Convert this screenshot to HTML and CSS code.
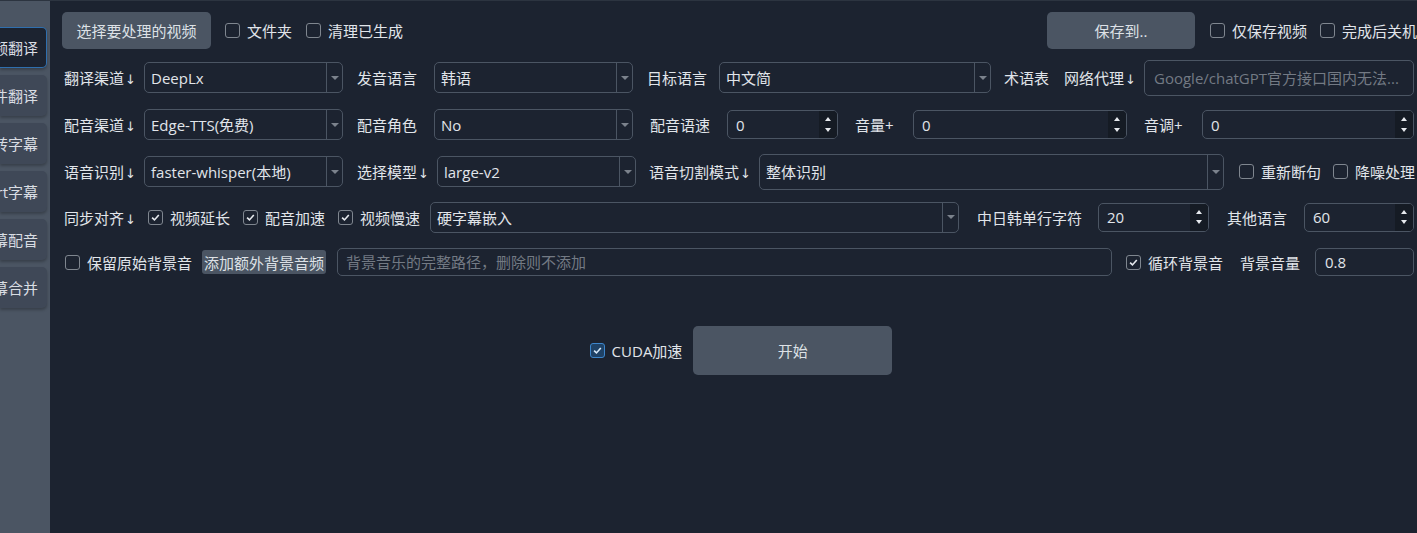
FILE: index.html
```html
<!DOCTYPE html>
<html lang="zh-CN">
<head>
    <meta charset="UTF-8">
    <title>视频翻译</title>
    <link rel="stylesheet" href="styles.css">
</head>
<body>
    <nav class="sidebar">
        <div class="nav-btn active">视频翻译</div>
        <div class="nav-btn">文件翻译</div>
        <div class="nav-btn">音视频转字幕</div>
        <div class="nav-btn">翻译srt字幕</div>
        <div class="nav-btn">字幕配音</div>
        <div class="nav-btn">视频字幕合并</div>
    </nav>

    <main class="main">
        <div class="row-top">
            <button class="btn btn-select">选择要处理的视频</button>
            <label class="check"><span class="box"></span>文件夹</label>
            <label class="check"><span class="box"></span>清理已生成</label>
            <div class="top-right">
                <button class="btn btn-save">保存到..</button>
                <label class="check"><span class="box"></span>仅保存视频</label>
                <label class="check"><span class="box"></span>完成后关机</label>
            </div>
        </div>

        <div class="row row-translate">
            <span class="lbl first">翻译渠道<span class="arr">↓</span></span>
            <div class="combo"><span class="combo-text">DeepLx</span><span class="combo-arrow"></span></div>
            <span class="lbl">发音语言</span>
            <div class="combo"><span class="combo-text">韩语</span><span class="combo-arrow"></span></div>
            <span class="lbl">目标语言</span>
            <div class="combo"><span class="combo-text">中文简</span><span class="combo-arrow"></span></div>
            <span class="lbl lbl-pair"><span>术语表</span><span>网络代理<span class="arr">↓</span></span></span>
            <input class="field tall" placeholder="Google/chatGPT官方接口国内无法...">
        </div>

        <div class="row row-dub">
            <span class="lbl first">配音渠道<span class="arr">↓</span></span>
            <div class="combo"><span class="combo-text">Edge-TTS(免费)</span><span class="combo-arrow"></span></div>
            <span class="lbl">配音角色</span>
            <div class="combo"><span class="combo-text">No</span><span class="combo-arrow"></span></div>
            <span class="lbl">配音语速</span>
            <div class="spin"><span class="spin-text">0</span><span class="spin-btns"><i class="up"></i><i class="down"></i></span></div>
            <span class="lbl">音量+</span>
            <div class="spin"><span class="spin-text">0</span><span class="spin-btns"><i class="up"></i><i class="down"></i></span></div>
            <span class="lbl">音调+</span>
            <div class="spin"><span class="spin-text">0</span><span class="spin-btns"><i class="up"></i><i class="down"></i></span></div>
        </div>

        <div class="row row-asr">
            <span class="lbl first">语音识别<span class="arr">↓</span></span>
            <div class="combo"><span class="combo-text">faster-whisper(本地)</span><span class="combo-arrow"></span></div>
            <span class="lbl">选择模型<span class="arr">↓</span></span>
            <div class="combo"><span class="combo-text">large-v2</span><span class="combo-arrow"></span></div>
            <span class="lbl">语音切割模式<span class="arr">↓</span></span>
            <div class="combo tall"><span class="combo-text">整体识别</span><span class="combo-arrow"></span></div>
            <label class="check"><span class="box"></span>重新断句</label>
            <label class="check"><span class="box"></span>降噪处理</label>
        </div>

        <div class="row row-sync">
            <span class="lbl first">同步对齐<span class="arr">↓</span></span>
            <label class="check"><span class="box on"><svg viewBox="0 0 15 15"><path d="M3.6 7.6l2.7 2.7 5-5.6"/></svg></span>视频延长</label>
            <label class="check"><span class="box on"><svg viewBox="0 0 15 15"><path d="M3.6 7.6l2.7 2.7 5-5.6"/></svg></span>配音加速</label>
            <label class="check"><span class="box on"><svg viewBox="0 0 15 15"><path d="M3.6 7.6l2.7 2.7 5-5.6"/></svg></span>视频慢速</label>
            <div class="combo"><span class="combo-text">硬字幕嵌入</span><span class="combo-arrow"></span></div>
            <span class="lbl">中日韩单行字符</span>
            <div class="spin"><span class="spin-text">20</span><span class="spin-btns"><i class="up"></i><i class="down"></i></span></div>
            <span class="lbl">其他语言</span>
            <div class="spin"><span class="spin-text">60</span><span class="spin-btns"><i class="up"></i><i class="down"></i></span></div>
        </div>

        <div class="row row-bgm">
            <label class="check keep"><span class="box"></span>保留原始背景音</label>
            <button class="btn btn-bgm">添加额外背景音频</button>
            <input class="field bgm-path" placeholder="背景音乐的完整路径，删除则不添加">
            <label class="check loop"><span class="box on"><svg viewBox="0 0 15 15"><path d="M3.6 7.6l2.7 2.7 5-5.6"/></svg></span>循环背景音</label>
            <span class="lbl">背景音量</span>
            <input class="field" value="0.8">
        </div>

        <div class="actions">
            <label class="check cuda"><span class="box on"><svg viewBox="0 0 15 15"><path d="M3.6 7.6l2.7 2.7 5-5.6"/></svg></span>CUDA加速</label>
            <button class="btn btn-start">开始</button>
        </div>
    </main>
</body>
</html>
```

FILE: styles.css
```css
* {
    margin: 0;
    padding: 0;
    box-sizing: border-box;
}

body {
    height: 100vh;
    display: flex;
    overflow: hidden;
    background: #1c2330;
    color: #e1e5ea;
    font-family: "Open Sans", "Noto Sans CJK SC", sans-serif;
    font-size: 15px;
    border-top: 1px solid #2c3440;
}

/* left tool bar */
.sidebar {
    width: 50px;
    flex-shrink: 0;
    background: #4b5563;
    padding-top: 26px;
}

.nav-btn {
    width: 47px;
    height: 41px;
    margin-bottom: 7px;
    display: flex;
    align-items: center;
    justify-content: flex-end;
    padding-right: 9px;
    overflow: hidden;
    white-space: nowrap;
    background: #3f4857;
    color: #d9dde3;
    font-size: 15px;
    border-radius: 0 5px 5px 0;
    box-shadow: 0 2px 3px rgba(0, 0, 0, 0.25);
}

.nav-btn.active {
    background: #1c2330;
    border: 1.5px solid #2f6fae;
    border-left: none;
    padding-right: 8px;
}

/* main form */
.main {
    flex: 1;
    padding: 11px 1px 0 12px;
}

.row-top {
    display: flex;
    align-items: center;
    height: 37px;
    margin-bottom: 5px;
}

.top-right {
    display: flex;
    align-items: center;
    margin-left: auto;
}

.row {
    display: grid;
    align-items: center;
    height: 47px;
}

.row-translate {
    grid-template-columns: 82px 199px 91px 199px 86px 272px 153px 270px;
}

.row-dub {
    grid-template-columns: 82px 199px 91px 199px 94px 111px 75px 214px 75px 212px;
}

.row-asr {
    grid-template-columns: 82px 199px 94px 199px 123px 465px 94px 99px;
}

.row-sync {
    height: 44px;
    grid-template-columns: 86px 95px 95px 92px 529px 139px 111px 95px 110px;
}

.row-bgm {
    height: 46px;
    grid-template-columns: 140px 124px 786px 128px 75px 99px;
}

.lbl {
    padding-left: 14px;
    white-space: nowrap;
    color: #e1e5ea;
}

.lbl.first {
    padding-left: 2px;
}

.row-dub .lbl {
    padding-left: 17px;
}

.row-dub .lbl:first-child {
    padding-left: 2px;
}

.row-dub .lbl:nth-child(3) {
    padding-left: 14px;
}

.row-asr .lbl:nth-child(5) {
    padding-left: 13px;
}

.row-sync .lbl {
    padding-left: 18px;
}

.row-sync .lbl.first {
    padding-left: 2px;
}

.row-bgm .lbl {
    padding-left: 0;
}

.lbl-pair {
    display: flex;
    gap: 15px;
    padding-left: 13px;
}

.arr {
    font-family: "DejaVu Sans", sans-serif;
    font-size: 13px;
    margin-left: 1px;
}

/* checkboxes */
.check {
    display: flex;
    align-items: center;
    gap: 7px;
    white-space: nowrap;
    color: #e1e5ea;
}

.row-top .check {
    margin-left: 14px;
}

.top-right .check {
    margin-left: 15px;
}

.top-right .check:last-child {
    margin-left: 13px;
}

.row-asr .check {
    padding-left: 15px;
}

.check.keep {
    padding-left: 3px;
}

.check.loop {
    padding-left: 14px;
}

.box {
    width: 15px;
    height: 15px;
    flex-shrink: 0;
    border: 1.5px solid #7f868f;
    border-radius: 3px;
    display: flex;
}

.box svg {
    width: 100%;
    height: 100%;
    fill: none;
    stroke: #e6e9ed;
    stroke-width: 1.9;
}

.cuda .box {
    border-color: #3d86cc;
    background: #1f4266;
}

.cuda .box svg {
    stroke: #d7e8f8;
}

/* buttons */
.btn {
    border: none;
    background: #4b5563;
    color: #dde1e6;
    font-family: inherit;
    font-size: 15px;
    border-radius: 5px;
}

.btn-select {
    width: 149px;
    height: 37px;
}

.btn-save {
    width: 148px;
    height: 37px;
}

.btn-bgm {
    width: 124px;
    height: 24px;
    border-radius: 3px;
    white-space: nowrap;
    padding: 0 2px;
}

.btn-start {
    width: 199px;
    height: 49px;
}

/* combo boxes */
.combo {
    height: 31px;
    display: flex;
    border: 1px solid #4b5563;
    border-radius: 5px;
}

.combo.tall {
    height: 36px;
}

.combo-text {
    flex: 1;
    display: flex;
    align-items: center;
    padding-left: 6px;
    white-space: nowrap;
    overflow: hidden;
}

.combo-arrow {
    width: 16px;
    border-left: 1px solid #4b5563;
    display: flex;
    align-items: center;
    justify-content: center;
}

.combo-arrow::after {
    content: "";
    border-top: 4px solid #7b828c;
    border-left: 4px solid transparent;
    border-right: 4px solid transparent;
}

/* spin boxes */
.spin {
    height: 29px;
    display: flex;
    border: 1px solid #4b5563;
    border-radius: 5px;
    overflow: hidden;
}

.spin-text {
    flex: 1;
    display: flex;
    align-items: center;
    padding-left: 8px;
}

.spin-btns {
    width: 18px;
    display: flex;
    flex-direction: column;
    justify-content: space-evenly;
    align-items: center;
    background: #151b24;
}

.spin-btns i {
    border-left: 3px solid transparent;
    border-right: 3px solid transparent;
}

.spin-btns .up {
    border-bottom: 4px solid #e6e9ed;
}

.spin-btns .down {
    border-top: 4px solid #e6e9ed;
}

/* text fields */
.field {
    width: 100%;
    height: 28px;
    background: transparent;
    border: 1px solid #4b5563;
    border-radius: 5px;
    padding-left: 9px;
    color: #e1e5ea;
    font-family: inherit;
    font-size: 15px;
    outline: none;
}

.field.tall {
    height: 36px;
}

.field::placeholder {
    color: #737a84;
}

.bgm-path {
    width: 775px;
    margin-left: 11px;
    padding-left: 8px;
}

/* start */
.actions {
    display: flex;
    align-items: center;
    justify-content: center;
    gap: 11px;
    margin-top: 41px;
    padding-left: 3px;
}
```
